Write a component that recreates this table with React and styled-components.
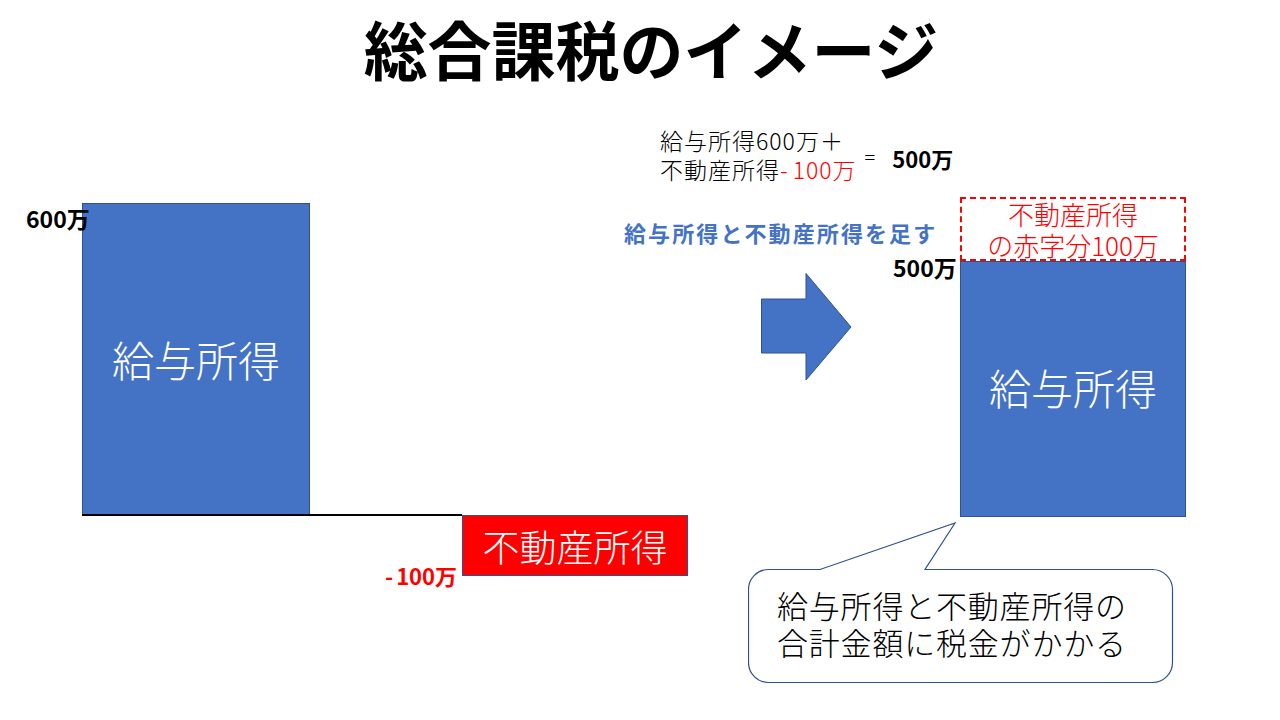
import React from 'react'
import styled, { createGlobalStyle } from 'styled-components'

const blue = '#4472C4'
const blueEdge = '#2F528F'
const red = '#FF0000'
const jp = `'Noto Sans CJK JP', 'Noto Sans', sans-serif`

const Global = createGlobalStyle`
  html, body {
    margin: 0;
    padding: 0;
    background: #fff;
  }
  body {
    font-family: ${jp};
  }
`

const Slide = styled.div`
  position: relative;
  width: 1280px;
  height: 720px;
  overflow: hidden;
  background: #fff;
  color: #000;
`

const Title = styled.h1`
  margin: 0;
  padding: 12px 0 0 22px;
  font-size: 64px;
  line-height: 70px;
  font-weight: 700;
  text-align: center;
`

// free canvas of the diagram: every shape sits at its own spot
const Canvas = styled.div`
  position: absolute;
  inset: 0;
`

const Label = styled.div`
  position: absolute;
  left: ${(p) => p.$x}px;
  top: ${(p) => p.$y}px;
  font-size: ${(p) => p.$size || 22}px;
  line-height: ${(p) => p.$size || 22}px;
  font-weight: ${(p) => p.$weight || 700};
  color: ${(p) => p.$color || '#000'};
  white-space: nowrap;
  letter-spacing: ${(p) => p.$ls || 0}px;
`

const Dash = styled.span`
  margin-right: ${(p) => p.$gap || 2}px;
`

const Red = styled.span`
  color: ${red};
`

const Bar = styled.div`
  position: absolute;
  left: ${(p) => p.$x}px;
  top: ${(p) => p.$y}px;
  width: ${(p) => p.$w}px;
  height: ${(p) => p.$h}px;
  box-sizing: border-box;
  background: ${(p) => p.$fill || blue};
  border: 1px solid ${blueEdge};
  display: flex;
  align-items: center;
  justify-content: center;
  color: #fff;
  font-size: ${(p) => p.$size || 42}px;
  font-weight: 300;
  padding-bottom: ${(p) => p.$lift || 0}px;
`

const Axis = styled.div`
  position: absolute;
  left: 82px;
  top: 514px;
  width: 380px;
  height: 2px;
  background: #000;
`

const Formula = styled.div`
  position: absolute;
  left: 660px;
  top: 126px;
  display: flex;
  align-items: center;
  white-space: nowrap;
`

const Terms = styled.div`
  font-size: 23px;
  line-height: 29px;
  font-weight: 300;
  letter-spacing: 1px;
`

const Equals = styled.span`
  margin-left: 8px;
  margin-top: 2px;
  font-size: 20px;
  font-weight: 300;
`

const Total = styled.span`
  margin-left: 17px;
  margin-top: 6px;
  font-size: 22px;
  font-weight: 700;
`

const Stack = styled.div`
  position: absolute;
  left: 960px;
  top: 197px;
  width: 226px;
  display: flex;
  flex-direction: column;
`

const Deficit = styled.div`
  height: 64px;
  box-sizing: border-box;
  border: 2px dashed ${red};
  color: ${red};
  font-size: 26px;
  line-height: 31px;
  font-weight: 300;
  text-align: center;
  display: flex;
  flex-direction: column;
  justify-content: center;
  overflow: visible;
`

const Income = styled.div`
  height: 256px;
  box-sizing: border-box;
  background: ${blue};
  border: 1px solid ${blueEdge};
  display: flex;
  align-items: center;
  justify-content: center;
  color: #fff;
  font-size: 42px;
  font-weight: 300;
  padding-bottom: 6px;
`

const Arrow = styled.svg`
  position: absolute;
  left: 760px;
  top: 272px;
`

const Callout = styled.div`
  position: absolute;
  left: 748px;
  top: 522px;
  width: 426px;
  height: 162px;
`

const CalloutShape = styled.svg`
  position: absolute;
  inset: 0;
`

const CalloutText = styled.div`
  position: relative;
  padding: 64px 0 0 29px;
  display: flex;
  flex-direction: column;
  font-size: 31px;
  line-height: 37px;
  font-weight: 300;
  letter-spacing: 0.8px;
`

export default function App() {
  return (
    <Slide>
      <Global />
      <Title>総合課税のイメージ</Title>
      <Canvas>
        <Bar $x={82} $y={203} $w={228} $h={313} $lift={2}>給与所得</Bar>
        <Label $x={26} $y={207} $size={23}>600万</Label>
        <Axis />
        <Bar $x={462} $y={515} $w={226} $h={61} $fill={red} $size={37}>不動産所得</Bar>
        <Label $x={385} $y={564} $size={22} $color={red}>
          <Dash $gap={3}>-</Dash>100万
        </Label>

        <Formula>
          <Terms>
            <div>給与所得600万＋</div>
            <div>不動産所得<Red><Dash $gap={4}>-</Dash>100万</Red></div>
          </Terms>
          <Equals>=</Equals>
          <Total>500万</Total>
        </Formula>
        <Label $x={624} $y={221} $size={22} $color={blue} $ls={2.1}>
          給与所得と不動産所得を足す
        </Label>

        <Arrow width="94" height="110" viewBox="0 0 94 110">
          <polygon
            points="1.5,27 46,27 46,1.5 91,55 46,108 46,81 1.5,81"
            fill={blue}
            stroke={blueEdge}
            strokeWidth="1"
          />
        </Arrow>

        <Stack>
          <Deficit>
            <div>不動産所得</div>
            <div>の赤字分100万</div>
          </Deficit>
          <Income>給与所得</Income>
        </Stack>
        <Label $x={893} $y={256} $size={23}>500万</Label>

        <Callout>
          <CalloutShape width="426" height="162" viewBox="0 0 426 162">
            <path
              d="M20.5 47.5 H72 L207 1 L177 47.5 H404.5 A20 20 0 0 1 424.5 67.5 V140.5 A20 20 0 0 1 404.5 160.5 H20.5 A20 20 0 0 1 0.5 140.5 V67.5 A20 20 0 0 1 20.5 47.5 Z"
              fill="#fff"
              stroke={blueEdge}
              strokeWidth="1.2"
            />
          </CalloutShape>
          <CalloutText>
            <div>給与所得と不動産所得の</div>
            <div>合計金額に税金がかかる</div>
          </CalloutText>
        </Callout>
      </Canvas>
    </Slide>
  )
}
